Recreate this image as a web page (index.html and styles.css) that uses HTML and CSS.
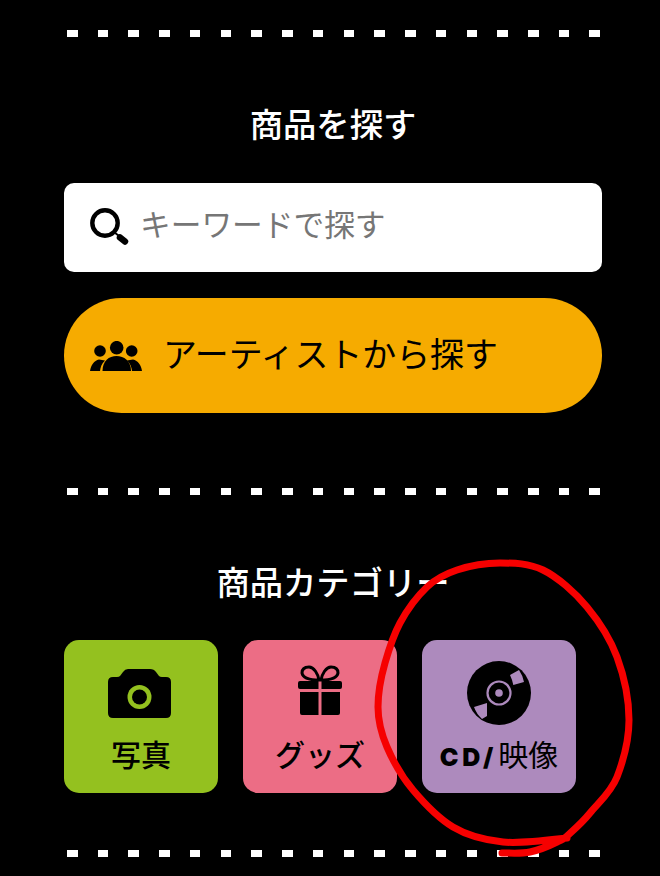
FILE: index.html
```html
<!DOCTYPE html>
<html lang="ja">
<head>
<meta charset="utf-8">
<title>商品を探す</title>
<link rel="stylesheet" href="styles.css">
</head>
<body>
<main class="page">
  <div class="sep"><i></i><i></i><i></i><i></i><i></i><i></i><i></i><i></i><i></i><i></i><i></i><i></i><i></i><i></i><i></i><i></i><i></i><i></i></div>
  <h2 class="title">商品を探す</h2>
  <div class="search">
    <svg class="search-icon" viewBox="0 0 40 40" aria-hidden="true">
      <circle cx="16" cy="15" r="12.7" fill="none" stroke="#000" stroke-width="4.4"/>
      <path d="M25 24 L30 28" stroke="#000" stroke-width="2"/>
      <path d="M31 29.500 L36 33.500" stroke="#000" stroke-width="6.500" stroke-linecap="round"/>
    </svg>
    <span class="placeholder">キーワードで探す</span>
  </div>
  <a class="artist">
    <svg class="people" viewBox="0 0 52 30" aria-hidden="true">
      <circle cx="26.700" cy="6.700" r="6.800"/>
      <circle cx="10" cy="10" r="5.800"/>
      <circle cx="41.700" cy="10" r="5.800"/>
      <path d="M12.500 30 C12.500 20 19 15 26.500 15 C34 15 41 20 41 30 Z"/>
      <path d="M0 30 C1 24 4 19.500 9 18.500 L15 19.500 C11.500 23 10.500 26 10 30 Z"/>
      <path d="M52 30 C51 24 48 19.500 43 18.500 L37 19.500 C40.500 23 41.500 26 42 30 Z"/>
    </svg>
    <span class="artist-label">アーティストから探す</span>
  </a>
  <div class="sep sep-mid"><i></i><i></i><i></i><i></i><i></i><i></i><i></i><i></i><i></i><i></i><i></i><i></i><i></i><i></i><i></i><i></i><i></i><i></i></div>
  <h2 class="title">商品カテゴリー</h2>
  <div class="tiles">
    <a class="tile tile-photo">
      <svg class="tile-icon" viewBox="0 0 64 64" aria-hidden="true">
        <path d="M19 8 L41 8 Q45 8 47 11 L50 15 Q51 16 53 16 L57 16 Q62 16 62 21 L62 52 Q62 57 57 57 L4 57 Q-1 57 -1 52 L-1 21 Q-1 16 4 16 L8 16 Q10 16 11 15 L14 11 Q16 8 19 8 Z"/>
        <circle cx="30.500" cy="36" r="12" fill="#94c11f"/>
        <circle cx="30.500" cy="36" r="7.500"/>
      </svg>
      <span>写真</span>
    </a>
    <a class="tile tile-goods">
      <svg class="tile-icon" viewBox="0 0 64 64" aria-hidden="true">
        <path d="M31 19 C25 19 15 18 14 12 C14 7 18 6 21 6 C26 6 30 13 31 19 Z M33 19 C39 19 49 18 50 12 C50 7 46 6 43 6 C38 6 34 13 33 19 Z" fill="none" stroke="#000" stroke-width="3"/>
        <path d="M12 20 L30.500 20 L30.500 28 L12 28 Q10 28 10 26 L10 22 Q10 20 12 20 Z M33.500 20 L52 20 Q54 20 54 22 L54 26 Q54 28 52 28 L33.500 28 Z"/>
        <path d="M12 31 L30.500 31 L30.500 54 L14 54 Q12 54 12 52 Z M33.500 31 L52 31 L52 52 Q52 54 50 54 L33.500 54 Z"/>
      </svg>
      <span>グッズ</span>
    </a>
    <a class="tile tile-cd">
      <svg class="tile-icon" viewBox="0 0 64 64" aria-hidden="true">
        <circle cx="32" cy="32" r="32"/>
        <path d="M43 14 L52 9 Q55.500 14 57 21 L46.300 24 Q45 18 43 14 Z M20 42 L7 46 Q9.500 53 15 58 L20 55 Z" fill="#ad8abd"/>
        <circle cx="32" cy="32" r="11.500" fill="none" stroke="#ad8abd" stroke-width="2.200"/>
        <circle cx="32" cy="32" r="3.800" fill="#ad8abd"/>
      </svg>
      <span class="cd-label"><b>CD/</b>映像</span>
    </a>
  </div>
  <div class="sep sep-end"><i></i><i></i><i></i><i></i><i></i><i></i><i></i><i></i><i></i><i></i><i></i><i></i><i></i><i></i><i></i><i></i><i></i><i></i></div>
</main>
<svg class="scribble" viewBox="0 0 660 876" aria-hidden="true">
  <path d="M502 853 C511 853 521 854 530 852 C539 850 551 845 557 842 C563 839 561.500 841 567 836 C572.500 831 582 823 590 813 C598 803 611 792.500 617 777 C623 761.500 629 740 629 720 C629 700 624 676 617 657 C610 638 599 621.500 587 607 C575 592.500 557.500 577 543 570 C528.500 563 514 563 500 563 C486 563 469 566 457 570 C445 574 436.500 578 427 587 C417.500 596 407 610 400 623 C393 636 389 649 385 663 C381 677 378 693 378 707 C378 721 381 733 387 747 C393 761 402 777 413 790 C424 803 438 818 453 827 C468 836 484 840 503 842 C522 844 557 839 567 838" fill="none" stroke="#f60000" stroke-width="7" stroke-linecap="round"/>
</svg>
</body>
</html>
```

FILE: styles.css
```css
* { box-sizing: border-box; }
html, body { margin: 0; height: 100%; background: #000; overflow: hidden; }
body {
  position: relative;
  font-family: "Noto Sans CJK JP", "Noto Sans", sans-serif;
  color: #000;
}
.page { padding: 30px 58px 0 64px; }
.sep {
  display: flex;
  justify-content: space-between;
  padding: 0 2px 0 3px;
}
.sep i { display: block; width: 10.500px; height: 7px; background: #fff; }
.sep-mid { margin-top: 75px; }
.sep-end { margin-top: 57px; }
.title {
  margin: 66px 0 0;
  height: 44px;
  line-height: 40px;
  font-size: 33.300px;
  font-weight: 500;
  color: #fff;
  text-align: center;
}
.search {
  display: flex;
  align-items: center;
  margin-top: 36px;
  height: 89px;
  padding-left: 25px;
  background: #fff;
  border-radius: 10px;
}
.search-icon { width: 40px; height: 40px; flex: none; }
.placeholder { margin-left: 11px; padding-bottom: 10px; font-size: 30.700px; color: #767676; }
.artist {
  display: flex;
  align-items: center;
  gap: 21px;
  margin-top: 26px;
  height: 115px;
  padding-left: 26px;
  background: #f6ab00;
  border-radius: 58px;
  font-size: 33.900px;
}
.artist-label { padding-bottom: 6px; }
.people { width: 52px; height: 30px; flex: none; }
.tiles { display: flex; gap: 25px; margin-top: 35px; }
.tile {
  display: flex;
  flex-direction: column;
  align-items: center;
  width: 154px;
  height: 153px;
  padding-top: 21px;
  border-radius: 15px;
  font-size: 30px;
  font-weight: 500;
  line-height: 36px;
}
.tile span { margin-top: 10px; white-space: nowrap; }
.tile-icon { width: 64px; height: 64px; flex: none; overflow: visible; }
.tile-photo { background: #94c11f; }
.tile-goods { background: #ec6d85; }
.tile-cd { background: #ad8abd; }
.cd-label { font-weight: 400; }
.cd-label b {
  font-family: "Inter", sans-serif;
  font-size: 25px;
  font-weight: 900;
  letter-spacing: 3.800px;
  margin-right: 1px;
}
.scribble { position: absolute; left: 0; top: 0; width: 660px; height: 876px; pointer-events: none; }
```
